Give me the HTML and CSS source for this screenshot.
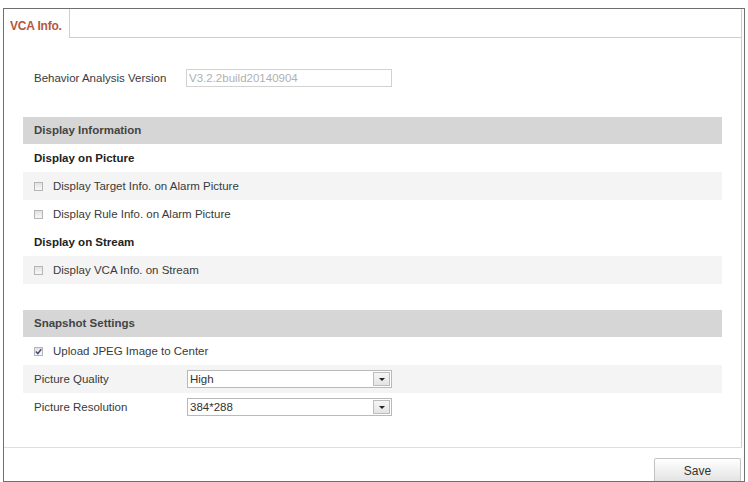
FILE: index.html
```html
<!DOCTYPE html>
<html lang="en">
<head>
    <meta charset="UTF-8">
    <title>VCA Info.</title>
    <link rel="stylesheet" href="styles.css">
</head>
<body>
    <div class="frame">
        <div class="tabs">
            <div class="tab">VCA Info.</div>
            <div class="tab-rest"></div>
        </div>
        <div class="panel">
            <div class="row version">
                <span class="label">Behavior Analysis Version</span>
                <span class="field">V3.2.2build20140904</span>
            </div>

            <div class="section">Display Information</div>
            <div class="row sub">Display on Picture</div>
            <div class="row shade">
                <span class="box"></span>Display Target Info. on Alarm Picture
            </div>
            <div class="row">
                <span class="box"></span>Display Rule Info. on Alarm Picture
            </div>
            <div class="row sub">Display on Stream</div>
            <div class="row shade">
                <span class="box"></span>Display VCA Info. on Stream
            </div>

            <div class="section gap">Snapshot Settings</div>
            <div class="row">
                <span class="box checked">
                    <svg width="7" height="7" viewBox="0 0 7 7"><path d="M0.8 3.6 L2.8 5.6 L6.2 1.2" fill="none" stroke="#3a4a7a" stroke-width="1.4"/></svg>
                </span>Upload JPEG Image to Center
            </div>
            <div class="row shade">
                <span class="label">Picture Quality</span>
                <div class="select"><span class="value">High</span><span class="arrow"></span></div>
            </div>
            <div class="row">
                <span class="label">Picture Resolution</span>
                <div class="select"><span class="value">384*288</span><span class="arrow"></span></div>
            </div>
        </div>
        <div class="footer">
            <button class="save">Save</button>
        </div>
    </div>
</body>
</html>
```

FILE: styles.css
```css
body{
    margin: 0;
    background-color: white;
    font-family: "Liberation Sans", Arial, sans-serif;
    font-size: 11.5px;
    color: #3a3a3a;
}
.frame{
    margin: 8px 0 0 3px;
    width: 740px;
    height: 472px;
    border: 1px solid #6f6f6f;
    display: flex;
    flex-direction: column;
}
.tabs{
    display: flex;
    height: 29px;
}
.tab{
    width: 66px;
    padding-top: 10px;
    padding-left: 6px;
    border-right: 1px solid #cfcfcf;
    box-sizing: border-box;
    font-size: 12px;
    font-weight: bold;
    color: #b4563f;
    letter-spacing: -0.2px;
}
.tab-rest{
    flex: 1;
    margin-right: 2px;
    border-bottom: 1px solid #cdcdcd;
    border-right: 1px solid #cdcdcd;
    box-sizing: border-box;
}
.panel{
    height: 410px;
    margin-right: 2px;
    padding: 28px 19px 0 19px;
    border-right: 1px solid #cdcdcd;
    border-bottom: 1px solid #dedede;
    box-sizing: border-box;
}
.row{
    display: flex;
    align-items: center;
    height: 28px;
    padding-left: 11px;
}
.version{
    height: 24px;
    margin-bottom: 27px;
}
.label{
    width: 152px;
}
.field{
    width: 202px;
    height: 16px;
    line-height: 16px;
    border: 1px solid #d2d2d2;
    padding-left: 2px;
    color: #b0b0b0;
    box-sizing: content-box;
}
.section{
    height: 27px;
    line-height: 27px;
    padding-left: 11px;
    background-color: #d6d6d6;
    font-weight: bold;
    color: #444;
}
.gap{
    margin-top: 26px;
}
.sub{
    font-weight: bold;
    color: #222;
}
.shade{
    background-color: #f4f4f4;
}
.box{
    width: 7px;
    height: 7px;
    margin-right: 10px;
    border: 1px solid #b5b5b5;
    background: linear-gradient(#e2e2e2, #f8f8f8);
    display: flex;
    align-items: center;
    justify-content: center;
}
.select{
    display: flex;
    width: 203px;
    height: 16px;
    border: 1px solid #b9b9b9;
    background-color: white;
    margin-left: 1px;
}
.value{
    flex: 1;
    line-height: 16px;
    padding-left: 2px;
    color: #333;
}
.arrow{
    width: 17px;
    height: 14px;
    margin: 0 1px 0 0;
    align-self: center;
    border: 1px solid #bcbcbc;
    background: linear-gradient(#f6f6f6, #e4e4e4);
    box-sizing: border-box;
    display: flex;
    align-items: center;
    justify-content: center;
}
.arrow::after{
    content: "";
    border-left: 3px solid transparent;
    border-right: 3px solid transparent;
    border-top: 3px solid #222;
}
.footer{
    flex: 1;
    display: flex;
    justify-content: flex-end;
    align-items: flex-end;
    padding-right: 3px;
}
.save{
    width: 87px;
    height: 23px;
    border: 1px solid #c2c2c2;
    border-bottom: none;
    border-radius: 2px 2px 0 0;
    background: linear-gradient(#ffffff, #e3e3e3);
    font-family: "Liberation Sans", Arial, sans-serif;
    font-size: 12px;
    color: #333;
    padding: 2px 0 0 0;
}
```
